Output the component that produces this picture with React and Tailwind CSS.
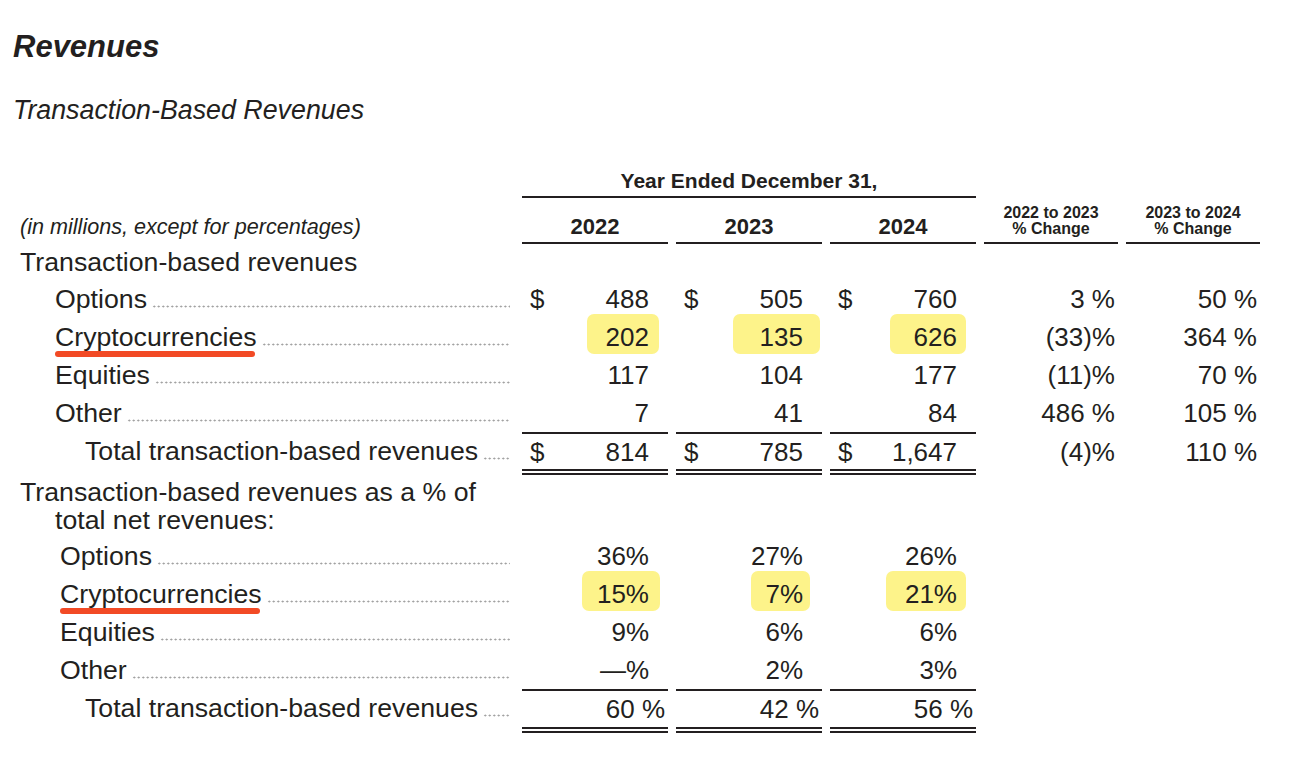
import React from "react";

const cols = "grid grid-cols-[514px_146px_146px_146px_134px_134px] gap-x-2";
const dots =
  "ml-[5px] h-[3px] flex-1 bg-[radial-gradient(circle,#9b9b9b_0.8px,transparent_1.2px)] bg-[length:4.5px_3px] bg-repeat-x";

const revenueRows = [
  { label: "Options", vals: ["488", "505", "760"], dollar: true, change: ["3 %", "50 %"] },
  {
    label: "Cryptocurrencies",
    vals: ["202", "135", "626"],
    change: ["(33)%", "364 %"],
    underline: true,
    marks: ["right-[9px] w-[72px]", "right-[2px] w-[87px]", "right-[10px] w-[76px]"],
  },
  { label: "Equities", vals: ["117", "104", "177"], change: ["(11)%", "70 %"] },
  { label: "Other", vals: ["7", "41", "84"], change: ["486 %", "105 %"] },
];

const shareRows = [
  { label: "Options", vals: ["36%", "27%", "26%"] },
  {
    label: "Cryptocurrencies",
    vals: ["15%", "7%", "21%"],
    underline: true,
    marks: ["right-[8px] w-[78px]", "right-[12px] w-[59px]", "right-[10px] w-[80px]"],
  },
  { label: "Equities", vals: ["9%", "6%", "6%"] },
  { label: "Other", vals: ["—%", "2%", "3%"] },
];

function Label({ text, indent, underline }) {
  return (
    <div className={`flex items-baseline pt-[4px] pr-1 ${indent}`}>
      <span className="relative whitespace-nowrap text-[26.7px]">
        {text}
        {underline && (
          <span className="absolute left-0 right-[2px] -bottom-[5px] h-[6px] rounded-full bg-[#f24a25]" />
        )}
      </span>
      <span className={dots} />
    </div>
  );
}

function Cell({ value, dollar, mark, pad = "pr-[19px]", total }) {
  return (
    <div
      className={`relative flex items-center pl-2 ${pad} ${
        total ? "border-t-2 border-b-[6px] [border-bottom-style:double] border-[#231f20]" : ""
      }`}
    >
      {mark && <span className={`absolute top-[-4px] h-[40px] rounded-[7px] bg-[#fdf38a] ${mark}`} />}
      {dollar && <span className="relative">$</span>}
      <span className="relative ml-auto whitespace-nowrap">{value}</span>
    </div>
  );
}

function Change({ value }) {
  return <div className="flex items-center justify-end pr-[3px] whitespace-nowrap">{value}</div>;
}

export default function App() {
  return (
    <div className="min-h-screen bg-white text-[#231f20] font-['Liberation_Sans',Arial,sans-serif] pt-[29px]">
      <h1 className="pl-[13px] text-[31px] leading-[36px] font-bold italic">Revenues</h1>
      <h2 className="mt-[29px] pl-[13px] text-[26.8px] leading-[32px] italic">Transaction-Based Revenues</h2>

      <div className="text-[26px] leading-[30px]">
        {/* column headers */}
        <div className={`${cols} h-[72px] items-end`}>
          <div className="col-start-2 col-span-3 border-b-2 border-[#231f20] pb-[3px] text-center text-[21px] leading-[24px] font-bold">
            Year Ended December 31,
          </div>
        </div>
        <div className={`${cols} h-[46px] items-end`}>
          <div className="pl-[20px] pb-[5px] text-[21.6px] leading-[24px] italic whitespace-nowrap">
            (in millions, except for percentages)
          </div>
          {["2022", "2023", "2024"].map((y) => (
            <div key={y} className="border-b-2 border-[#231f20] pb-[3px] text-center text-[22px] leading-[24px] font-bold">
              {y}
            </div>
          ))}
          {["2022 to 2023", "2023 to 2024"].map((c) => (
            <div key={c} className="border-b-2 border-[#231f20] pb-[5px] text-center text-[16px] leading-[16px] font-bold">
              {c}
              <br />% Change
            </div>
          ))}
        </div>

        {/* dollar amounts */}
        <div className="h-[36px] pl-[20px] flex items-center whitespace-nowrap text-[26.7px]">
          Transaction-based revenues
        </div>
        {revenueRows.map((r) => (
          <div key={r.label} className={`${cols} h-[38px]`}>
            <Label text={r.label} indent="pl-[55px]" underline={r.underline} />
            {r.vals.map((v, i) => (
              <Cell key={i} value={v} dollar={r.dollar} mark={r.marks && r.marks[i]} />
            ))}
            <Change value={r.change[0]} />
            <Change value={r.change[1]} />
          </div>
        ))}
        <div className={`${cols} h-[43px]`}>
          <Label text="Total transaction-based revenues" indent="pl-[85px]" />
          <Cell value="814" dollar total />
          <Cell value="785" dollar total />
          <Cell value="1,647" dollar total />
          <div className="flex items-center justify-end pr-[3px] pb-[4px]">(4)%</div>
          <div className="flex items-center justify-end pr-[3px] pb-[4px]">110 %</div>
        </div>

        {/* share of net revenues */}
        <div className="h-[62px] pt-[3px] text-[26.7px] leading-[28px] whitespace-nowrap">
          <div className="pl-[20px]">Transaction-based revenues as a % of</div>
          <div className="pl-[55px]">total net revenues:</div>
        </div>
        {shareRows.map((r) => (
          <div key={r.label} className={`${cols} h-[38px]`}>
            <Label text={r.label} indent="pl-[60px]" underline={r.underline} />
            {r.vals.map((v, i) => (
              <Cell key={i} value={v} mark={r.marks && r.marks[i]} />
            ))}
          </div>
        ))}
        <div className={`${cols} h-[44px]`}>
          <Label text="Total transaction-based revenues" indent="pl-[85px]" />
          <Cell value="60 %" pad="pr-[3px]" total />
          <Cell value="42 %" pad="pr-[3px]" total />
          <Cell value="56 %" pad="pr-[3px]" total />
        </div>
      </div>
    </div>
  );
}
